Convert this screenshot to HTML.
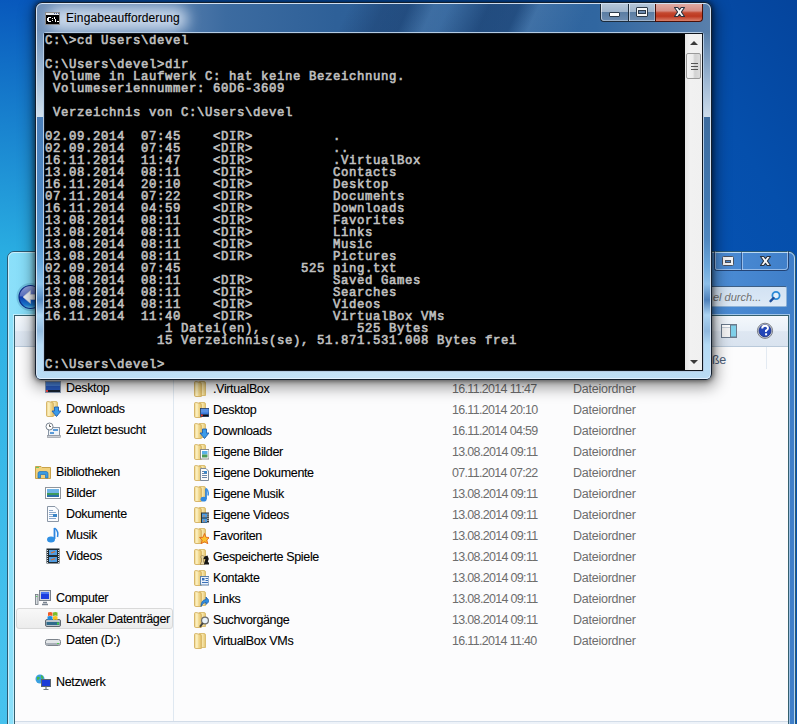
<!DOCTYPE html>
<html><head><meta charset="utf-8">
<style>
*{margin:0;padding:0;box-sizing:border-box}
html,body{width:797px;height:724px;overflow:hidden}
body{position:relative;font-family:"Liberation Sans",sans-serif;
background:radial-gradient(circle at -60px 700px,#46c2ee 60px,#2aaee2 450px,#0858bc 705px,#054fac 975px,#05449c 1110px);}
.abs{position:absolute}
svg{display:block}

/* ---------- explorer ---------- */
#exp{left:7px;top:251px;width:789px;height:490px;border-radius:7px 7px 0 0;
background:linear-gradient(90deg,#8ce0fa 0px,#84dcf8 28px,#6ab8ea 250px,#4c8dd6 704px,#3f7ec8 789px);
border:1px solid #2c5a72;}
#exp .ehl{left:0;top:0;right:0;bottom:0;border:1px solid rgba(225,245,255,.75);border-radius:6px 6px 0 0}
#client{left:6px;top:63px;width:775px;height:430px;background:#fcfcfd;border:1px solid #35606f;box-shadow:0 0 0 1px rgba(235,250,255,.55)}
#cmdbar{left:0;top:0;width:773px;height:31px;border-bottom:1px solid #b9c9da;
background:linear-gradient(#f4f8fc,#e9f0f8 48%,#dee7f2 52%,#d9e3ef)}
#navsep{left:158px;top:31px;width:1px;height:375px;background:#dfe8f1}
#colsep{left:751px;top:31px;width:1px;height:22px;background:#e3eaf2}
#details{left:0;top:405px;width:773px;height:30px;border-top:1px solid #d2dce8;background:linear-gradient(#eef3f9,#e3eaf3)}
#sel{left:16px;top:608px;width:157px;height:21px;border:1px solid #d9d9d9;border-radius:3px;background:linear-gradient(#f8f8f8,#ececec)}
.ic{position:absolute;width:16px;height:16px}
.t{position:absolute;font-size:11.7px;line-height:14px;white-space:nowrap}
.nv{font-size:12.5px;letter-spacing:-0.35px}
.nv{color:#000;-webkit-text-stroke:0.2px rgba(0,0,0,.6)}
.dt{color:#6d6d6d;font-size:12.5px;letter-spacing:-0.68px}
.ty{color:#6d6d6d;font-size:12.5px;letter-spacing:-0.25px}
#hdr{left:712px;top:353px;font-size:12.5px;letter-spacing:-0.35px;line-height:14px;color:#4c607a}
#back{left:14px;top:281px;width:26px;height:32px}
#search{left:711px;top:286px;width:76px;height:21px;border:1px solid #8fb3d8;border-top-color:#3d5f86;border-left:none;border-radius:0 2px 2px 0;
background:linear-gradient(#d2e2f3,#dde9f6)}
#search .st{position:absolute;left:2px;top:3px;font-style:italic;font-size:11px;line-height:14px;color:#707070;white-space:nowrap}
#ebtns{left:711px;top:251px;width:80px;height:21px}
#cmdicons{left:711px;top:316px;width:76px;height:30px}

/* ---------- console ---------- */
#con{left:35px;top:2px;width:677px;height:378px;border-radius:7px 7px 6px 6px;
border:1px solid #14202e;overflow:hidden;
background:linear-gradient(90deg,#6f8fb7 0px,#5c82b0 120px,#3c6ba0 190px,#2e6098 300px,#3066a0 560px,#5a80ac 677px);
box-shadow:0 0 5px 1px rgba(0,0,0,.5),1px 4px 15px 3px rgba(0,0,0,.42)}
#con .hl{left:0;top:0;right:0;bottom:0;border:1px solid rgba(235,245,255,.85);border-radius:6px 6px 5px 5px}
#con .sideL{left:1px;top:28px;width:7px;height:86px;background:linear-gradient(#6f91b9,#a9c2da 60%,#d2e1ee)}
#con .sideR{left:666px;top:28px;width:8px;height:86px;background:linear-gradient(#587ea8,#a0b9d4 60%,#cddcea)}
#con .lowL{left:1px;top:114px;width:7px;height:262px;background:linear-gradient(#4a7eb8 0.0%,#4c86c2 31.7%,#5694ce 46.9%,#6aaade 56.5%,#8cc2ea 63.7%,#5488c0 69.8%,#b0d8f4 75.6%,#94bce0 81.7%,#b8dcf6 87.0%,#c2e2f8 100.0%)}
#con .lowR{left:666px;top:114px;width:8px;height:262px;background:linear-gradient(#3d6c9e 0.0%,#4278b0 31.7%,#5088c0 46.9%,#6aa6da 56.5%,#8cbee8 63.7%,#4e80ba 69.8%,#acd4f2 75.6%,#90b8de 81.7%,#b4daf4 87.0%,#c0e0f8 100.0%)}
#con .bot{left:1px;top:367px;width:673px;height:9px;background:linear-gradient(90deg,#b9dcf5,#c6e3f7 50%,#b9dbf3)}
#con .glow{left:12px;top:4px;width:140px;height:24px;border-radius:12px;background:rgba(218,230,245,.85);filter:blur(7px)}
#con .icon{left:9px;top:9px;width:15px;height:13px}
#con .title{left:30px;top:8px;font-size:12px;letter-spacing:0.1px;color:#000;white-space:nowrap;-webkit-text-stroke:0.2px rgba(0,0,0,.5)}
#sbox{left:7px;top:29px;width:661px;height:340px;border:1px solid #b4cbe3;border-radius:3px 3px 0 0}
#screen{left:8px;top:30px;width:659px;height:338px;background:#000;border:1px solid #10161e}
#screen pre{position:absolute;left:0px;top:1px;font-family:"Liberation Mono",monospace;font-weight:normal;
font-size:12.3px;letter-spacing:0.62px;line-height:12px;color:#c0c0c0;-webkit-text-stroke:0.6px #c0c0c0}
#sb{left:640px;top:0px;width:17px;height:336px;background:linear-gradient(90deg,#e6e6e6,#f1f1f1 30%,#f0f0f0)}
#sb .up{left:5px;top:7px;width:0;height:0;border-left:4px solid transparent;border-right:4px solid transparent;border-bottom:4px solid #3a3a3a}
#sb .dn{left:5px;top:326px;width:0;height:0;border-left:4px solid transparent;border-right:4px solid transparent;border-top:4px solid #3a3a3a}
#sb .th{left:1px;top:19px;width:15px;height:26px;border:1px solid #9a9a9a;border-radius:2px;
background:linear-gradient(90deg,#f2f2f2,#ececec 45%,#d2d2d2 60%,#dcdcdc)}
#sb .th i{position:absolute;left:4px;width:7px;height:1px;background:#555}
.btns{left:563px;top:0px;width:104px;height:20px}
.bmin{left:1px;top:1px;width:28px;height:18px;border:1px solid #1d2c3c;border-top:none;border-right:none;border-radius:0 0 0 4px;
background:linear-gradient(#b4c5d8,#9fb4cb 45%,#5b7da3 50%,#6d8cb0);box-shadow:inset 1px 0 0 rgba(255,255,255,.55),inset 0 -1px 0 rgba(255,255,255,.35)}
.bmax{left:29px;top:1px;width:27px;height:18px;border-bottom:1px solid #1d2c3c;border-left:1px solid #1d2c3c;
background:linear-gradient(#b4c5d8,#9fb4cb 45%,#5b7da3 50%,#6d8cb0);box-shadow:inset 1px 0 0 rgba(255,255,255,.55),inset -1px 0 0 rgba(255,255,255,.3),inset 0 -1px 0 rgba(255,255,255,.35)}
.bcls{left:56px;top:1px;width:48px;height:18px;border:1px solid #4a0f08;border-top:none;border-radius:0 0 4px 0;
background:linear-gradient(#e0aaa2,#d68e84 40%,#c4482f 52%,#bd3820 72%,#cf6650 90%,#d8806a)}
.bmin i{position:absolute;left:8px;top:8px;width:11px;height:5px;background:#fff;border:1px solid #2c3a4a;border-radius:1px}
.bmax i{position:absolute;left:7px;top:3px;width:12px;height:10px;background:#f6f6f6;border:1px solid #2c3a4a;border-radius:1px}
.bmax i b{position:absolute;left:1px;top:2px;width:8px;height:4px;background:#6a88ae;border:1px solid #2c3a4a}
#con .streak{left:0;top:0;width:677px;height:31px;transform:skewX(-25deg);transform-origin:0 31px;
background:linear-gradient(90deg,rgba(0,0,0,0) 300px,rgba(0,15,50,.22) 335px,rgba(0,15,50,.25) 360px,rgba(255,255,255,.07) 385px,rgba(255,255,255,.06) 400px,rgba(0,15,50,.28) 440px,rgba(0,15,50,.26) 470px,rgba(255,255,255,.08) 490px,rgba(0,0,0,0) 540px)}

</style></head><body>
<svg width="0" height="0" style="position:absolute"><defs>
<linearGradient id="fgF" x1="0" y1="0" x2="1" y2="0"><stop offset="0" stop-color="#ecd184"/><stop offset="0.35" stop-color="#fdf3c8"/><stop offset="0.6" stop-color="#f2da92"/><stop offset="1" stop-color="#e4c36c"/></linearGradient>
<linearGradient id="fgB" x1="0" y1="0" x2="1" y2="0"><stop offset="0" stop-color="#e9cd7e"/><stop offset="0.5" stop-color="#f6e4a8"/><stop offset="1" stop-color="#e3c470"/></linearGradient>
</defs></svg>
<div id="exp" class="abs"><div class="ehl abs"></div>
  <div id="client" class="abs">
    <div id="cmdbar" class="abs"></div>
    <div id="navsep" class="abs"></div>
    <div id="colsep" class="abs"></div>
    <div id="details" class="abs"></div>
  </div>
</div>
<div id="sel" class="abs"></div>
<div id="back" class="abs"><svg width="26" height="32" viewBox="0 0 26 32">
<defs><linearGradient id="bg1" x1="0" y1="0" x2="0" y2="1"><stop offset="0" stop-color="#9aa8dc"/><stop offset="0.45" stop-color="#5a70c4"/><stop offset="0.5" stop-color="#0b3ab0"/><stop offset="0.85" stop-color="#1d7ed6"/><stop offset="1" stop-color="#6fd0f0"/></linearGradient></defs>
<circle cx="16.5" cy="16" r="13" fill="none" stroke="rgba(40,110,150,.25)" stroke-width="2"/>
<circle cx="16.5" cy="16" r="11.5" fill="url(#bg1)" stroke="#0a2a88" stroke-width="1.2"/>
<path d="M9 16 L16.5 9.5 L16.5 13.5 L26 13.5 L26 18.5 L16.5 18.5 L16.5 22.5 Z" fill="#eceff4" stroke="#c8ccd6" stroke-width="0.6" stroke-linejoin="round"/>
</svg></div>
<div id="search" class="abs"><div class="st">el durch...</div>
<svg width="20" height="19" style="position:absolute;left:55px;top:0"><circle cx="10" cy="8.5" r="3.6" fill="#e4f0fa" stroke="#2b8ad6" stroke-width="1.8"/><path d="M7.6 11 L4.5 14.2" stroke="#1d4f9c" stroke-width="2.4" stroke-linecap="round"/></svg></div>
<div id="ebtns" class="abs"><svg width="80" height="21" viewBox="0 0 80 21">
<path d="M3.5 0.5 V17.5 Q3.5 19.5 5.5 19.5 H74.5 Q77.5 19.5 77.5 16.5 V0.5" fill="none" stroke="rgba(20,40,80,.7)"/>
<path d="M4.5 0.5 V17 Q4.5 18.5 6 18.5 H74 Q76.5 18.5 76.5 16 V0.5 M31.5 1 V18.5" fill="none" stroke="rgba(220,235,255,.55)"/>
<path d="M30.5 1 V19" stroke="rgba(20,40,80,.5)"/>
<rect x="11.5" y="5.5" width="11" height="9" rx="1" fill="#f4f4f4" stroke="#4a5260"/><rect x="14.5" y="9.5" width="5" height="2" fill="#4d86c8" stroke="#4a5260" stroke-width="1"/>
<path d="M49.5 5.5 L52.8 5.5 L54.5 7.7 L56.2 5.5 L59.5 5.5 L56.4 10 L59.5 14.5 L56.2 14.5 L54.5 12.3 L52.8 14.5 L49.5 14.5 L52.6 10 Z" fill="#f8f8f8" stroke="#2a3340" stroke-width="1.1" stroke-linejoin="round"/>
</svg></div>
<div id="cmdicons" class="abs"><svg width="76" height="30" viewBox="0 0 76 30">
<rect x="10.5" y="8.5" width="15" height="13" fill="#f4f4f4" stroke="#6b7a8c"/><rect x="11" y="9" width="8" height="2" fill="#fff"/><path d="M11 11.5 H19" stroke="#c4ccd6"/><rect x="19.5" y="9" width="6" height="12" fill="#7fd0ea" stroke="#6b7a8c"/>
<circle cx="54" cy="14.8" r="7.6" fill="#c9ced6" stroke="#7c8088" stroke-width="1"/><circle cx="54" cy="14.8" r="6" fill="#2346b8" stroke="#1b2f80" stroke-width="0.8"/>
<path d="M51.2 12.6 Q51.2 9.7 54.1 9.7 Q57 9.7 57 12.3 Q57 13.8 55 14.6 V16" fill="none" stroke="#fff" stroke-width="1.9"/><rect x="54.1" y="17.3" width="2" height="2" fill="#fff"/>
</svg></div>
<div id="hdr" class="abs">ße</div>
<div class="ic" style="left:45px;top:380px"><svg width="16" height="16" viewBox="0 0 16 16" style="position:absolute;left:0;top:0"><rect x="0.5" y="1.5" width="15" height="11" fill="#2e62c4" stroke="#8a9bb3"/><rect x="1" y="2" width="14" height="8" fill="#4a82d8"/><rect x="1" y="6" width="14" height="4" fill="#2a5cc0"/><rect x="1" y="10" width="14" height="2" fill="#15202e"/><rect x="1" y="10" width="2" height="2" fill="#e44"/></svg></div>
<div class="t nv" style="left:66px;top:381px">Desktop</div>
<div class="ic" style="left:45px;top:401px"><svg width="16" height="16" viewBox="0 0 16 16" style="position:absolute;left:0;top:0"><path d="M6.5 0.5 H11 Q12.5 0.5 12.5 2 V14.5 H6.5 Z" fill="url(#fgB)" stroke="#d8ba6a" stroke-width="0.9"/>
<path d="M1.5 1.5 Q1.5 0.5 2.7 0.5 L7 1.3 Q8.3 1.7 8.3 3 V15.5 H2.7 Q1.5 15.5 1.5 14.3 Z" fill="url(#fgF)" stroke="#d4b060" stroke-width="0.9"/><path d="M9.5 6 H13.5 V10 H16 L11.5 15.5 L7 10 H9.5 Z" fill="#3b9ae8" stroke="#1d5fb0" stroke-width="0.9" stroke-linejoin="round"/></svg></div>
<div class="t nv" style="left:66px;top:402px">Downloads</div>
<div class="ic" style="left:45px;top:422px"><svg width="16" height="16" viewBox="0 0 16 16" style="position:absolute;left:0;top:0"><rect x="3.5" y="5.5" width="11" height="8" fill="#eef3f8" stroke="#8895a5"/><rect x="8" y="7" width="5" height="2" fill="#5a9ad8"/><rect x="5" y="10" width="4" height="2" fill="#5a9ad8"/><rect x="2.5" y="13.5" width="13" height="2" fill="#c8ccd2" stroke="#8a9099" stroke-width="0.6"/><circle cx="4.5" cy="4.5" r="3.5" fill="#fff" stroke="#7a8490"/><path d="M4.5 2.5 V4.5 H6" stroke="#333" stroke-width="0.8" fill="none"/></svg></div>
<div class="t nv" style="left:66px;top:423px">Zuletzt besucht</div>
<div class="ic" style="left:35px;top:464px"><svg width="16" height="16" viewBox="0 0 16 16" style="position:absolute;left:0;top:0"><path d="M0.5 2.5 H6 L7 3.5 H15.5 V14.5 H0.5 Z" fill="#f1d17c" stroke="#c9a24a"/><path d="M3 14 V9.5 Q3 7.5 5 7.5 H11 Q13 7.5 13 9.5 V14 H10.5 V10.5 H5.5 V14 Z" fill="#3a9ae0" stroke="#2270b8" stroke-width="0.7"/><rect x="1" y="3" width="3" height="1" fill="#6c6"/></svg></div>
<div class="t nv" style="left:56px;top:465px">Bibliotheken</div>
<div class="ic" style="left:45px;top:485px"><svg width="16" height="16" viewBox="0 0 16 16" style="position:absolute;left:0;top:0"><rect x="0.5" y="2.5" width="15" height="11" fill="#fff" stroke="#8f959c"/><rect x="2" y="4" width="12" height="4" fill="#6fb4e6"/><rect x="2" y="8" width="12" height="2" fill="#3d9a5c"/><rect x="2" y="10" width="12" height="2" fill="#2c6fa8"/></svg></div>
<div class="t nv" style="left:66px;top:486px">Bilder</div>
<div class="ic" style="left:45px;top:506px"><svg width="16" height="16" viewBox="0 0 16 16" style="position:absolute;left:0;top:0"><path d="M2.5 0.5 H10 L13.5 4 V15.5 H2.5 Z" fill="#fafcff" stroke="#8a96a6"/><path d="M4 4.5 H8 M4 6.5 H11 M4 8.5 H8 M4 10.5 H11 M4 12.5 H11" stroke="#8aa8cc"/><rect x="8" y="8" width="4" height="3" fill="#3a86c8"/></svg></div>
<div class="t nv" style="left:66px;top:507px">Dokumente</div>
<div class="ic" style="left:45px;top:527px"><svg width="16" height="16" viewBox="0 0 16 16" style="position:absolute;left:0;top:0"><path d="M9.5 1 V12" stroke="#2d86e0" stroke-width="1.8"/><ellipse cx="6" cy="12.5" rx="4" ry="3" fill="#2f8fe3"/><path d="M9.5 1 Q14 4 12.5 10" stroke="#2d86e0" stroke-width="1.5" fill="none"/></svg></div>
<div class="t nv" style="left:66px;top:528px">Musik</div>
<div class="ic" style="left:45px;top:548px"><svg width="16" height="16" viewBox="0 0 16 16" style="position:absolute;left:0;top:0"><rect x="1.5" y="0.5" width="13" height="15" fill="#1d2a33"/><path d="M2.5 2 V15 M13.5 2 V15" stroke="#ddd" stroke-width="1" stroke-dasharray="1 1"/><rect x="4" y="2" width="8" height="5" fill="#4f9be0"/><rect x="4" y="9" width="8" height="5" fill="#4f9be0"/><path d="M6 5 L10 3.5 M6 12 L10 10.5" stroke="#d86a2a" stroke-width="1.2"/></svg></div>
<div class="t nv" style="left:66px;top:549px">Videos</div>
<div class="ic" style="left:35px;top:590px"><svg width="16" height="16" viewBox="0 0 16 16" style="position:absolute;left:0;top:0"><rect x="4.5" y="0.5" width="11" height="10" fill="#d4d8dd" stroke="#7a828c"/><rect x="6" y="2" width="8" height="7" fill="#1c3fe0"/><rect x="6" y="2" width="8" height="2" fill="#4a78f0"/><path d="M8 12.5 H12 M7 14.5 H13" stroke="#7a8491" stroke-width="1.4"/><rect x="0.5" y="4.5" width="2.5" height="10" fill="#d8dde2" stroke="#70787f" stroke-width="0.8"/><rect x="1.3" y="6" width="1" height="1" fill="#3c3"/></svg></div>
<div class="t nv" style="left:56px;top:591px">Computer</div>
<div class="ic" style="left:45px;top:611px"><svg width="16" height="16" viewBox="0 0 16 16" style="position:absolute;left:0;top:0"><rect x="0.5" y="8.5" width="15" height="7" rx="1.5" fill="#bcc4cc" stroke="#5f6870"/><rect x="1.5" y="11" width="13" height="3" fill="#2f6a8a"/><rect x="12" y="11.5" width="2" height="2" fill="#4c4"/><path d="M3 1.5 Q5 0.5 7.5 1.5 V5 Q5 4 3 5 Z" fill="#f05a24"/><path d="M8 1.5 Q10.5 0.5 12.5 1.5 V5 Q10.5 4 8 5 Z" fill="#7cbb2a"/><path d="M2.5 5.5 Q5 4.5 7.5 5.5 V9 Q5 8 2.5 9 Z" fill="#1e8de0"/><path d="M8 5.5 Q10.5 4.5 12.5 5.5 V9 Q10.5 8 8 9 Z" fill="#fcc21c"/></svg></div>
<div class="t nv" style="left:66px;top:612px">Lokaler Datenträger</div>
<div class="ic" style="left:45px;top:632px"><svg width="16" height="16" viewBox="0 0 16 16" style="position:absolute;left:0;top:0"><rect x="0.5" y="7.5" width="15" height="6" rx="2" fill="#e3e6e9" stroke="#7c838b"/><rect x="1" y="11" width="14" height="2" fill="#a9b0b8"/><rect x="12" y="11" width="2" height="1" fill="#5c5"/></svg></div>
<div class="t nv" style="left:66px;top:633px">Daten (D:)</div>
<div class="ic" style="left:35px;top:674px"><svg width="16" height="16" viewBox="0 0 16 16" style="position:absolute;left:0;top:0"><circle cx="5" cy="5" r="4.5" fill="#3aa0e0"/><path d="M2 3 Q4 2 5 4 Q4 6 2 6 Z M6 1 Q9 2 8 5 Q6 5 6 3 Z" fill="#48b848"/><rect x="6.5" y="5.5" width="9" height="7" fill="#1b3bd8" stroke="#5a6570"/><path d="M11 12.5 V15 M8.5 15.5 H13.5" stroke="#6d7580" stroke-width="1.2"/></svg></div>
<div class="t nv" style="left:56px;top:675px">Netzwerk</div>
<div class="ic" style="left:193px;top:381px"><svg width="16" height="16" viewBox="0 0 16 16" style="position:absolute;left:0;top:0"><path d="M6.5 0.5 H11 Q12.5 0.5 12.5 2 V14.5 H6.5 Z" fill="url(#fgB)" stroke="#d8ba6a" stroke-width="0.9"/>
<path d="M1.5 1.5 Q1.5 0.5 2.7 0.5 L7 1.3 Q8.3 1.7 8.3 3 V15.5 H2.7 Q1.5 15.5 1.5 14.3 Z" fill="url(#fgF)" stroke="#d4b060" stroke-width="0.9"/></svg></div>
<div class="t nv" style="left:213px;top:382px">.VirtualBox</div>
<div class="t dt" style="left:452px;top:382px">16.11.2014 11:47</div>
<div class="t ty" style="left:573px;top:382px">Dateiordner</div>
<div class="ic" style="left:193px;top:402px"><svg width="16" height="16" viewBox="0 0 16 16" style="position:absolute;left:0;top:0"><path d="M6.5 0.5 H11 Q12.5 0.5 12.5 2 V14.5 H6.5 Z" fill="url(#fgB)" stroke="#d8ba6a" stroke-width="0.9"/>
<path d="M1.5 1.5 Q1.5 0.5 2.7 0.5 L7 1.3 Q8.3 1.7 8.3 3 V15.5 H2.7 Q1.5 15.5 1.5 14.3 Z" fill="url(#fgF)" stroke="#d4b060" stroke-width="0.9"/><rect x="7.5" y="6.5" width="8.5" height="8" fill="#3a78d8" stroke="#223c6a" stroke-width="0.8"/><rect x="8" y="7" width="7.5" height="3.5" fill="#5a92e6"/><rect x="8" y="12.5" width="7.5" height="1.8" fill="#111"/><rect x="8" y="12.5" width="1.8" height="1.8" fill="#e33"/></svg></div>
<div class="t nv" style="left:213px;top:403px">Desktop</div>
<div class="t dt" style="left:452px;top:403px">16.11.2014 20:10</div>
<div class="t ty" style="left:573px;top:403px">Dateiordner</div>
<div class="ic" style="left:193px;top:423px"><svg width="16" height="16" viewBox="0 0 16 16" style="position:absolute;left:0;top:0"><path d="M6.5 0.5 H11 Q12.5 0.5 12.5 2 V14.5 H6.5 Z" fill="url(#fgB)" stroke="#d8ba6a" stroke-width="0.9"/>
<path d="M1.5 1.5 Q1.5 0.5 2.7 0.5 L7 1.3 Q8.3 1.7 8.3 3 V15.5 H2.7 Q1.5 15.5 1.5 14.3 Z" fill="url(#fgF)" stroke="#d4b060" stroke-width="0.9"/><path d="M9.5 6 H13.5 V10 H16 L11.5 15.5 L7 10 H9.5 Z" fill="#3b9ae8" stroke="#1d5fb0" stroke-width="0.9" stroke-linejoin="round"/></svg></div>
<div class="t nv" style="left:213px;top:424px">Downloads</div>
<div class="t dt" style="left:452px;top:424px">16.11.2014 04:59</div>
<div class="t ty" style="left:573px;top:424px">Dateiordner</div>
<div class="ic" style="left:193px;top:444px"><svg width="16" height="16" viewBox="0 0 16 16" style="position:absolute;left:0;top:0"><path d="M6.5 0.5 H11 Q12.5 0.5 12.5 2 V14.5 H6.5 Z" fill="url(#fgB)" stroke="#d8ba6a" stroke-width="0.9"/>
<path d="M1.5 1.5 Q1.5 0.5 2.7 0.5 L7 1.3 Q8.3 1.7 8.3 3 V15.5 H2.7 Q1.5 15.5 1.5 14.3 Z" fill="url(#fgF)" stroke="#d4b060" stroke-width="0.9"/><rect x="7.5" y="5.5" width="8.5" height="9.5" fill="#fff" stroke="#8a8a8a"/><rect x="9" y="7" width="5.5" height="3.5" fill="#5ab0e8"/><rect x="9" y="10.5" width="5.5" height="3" fill="#4c9a58"/></svg></div>
<div class="t nv" style="left:213px;top:445px">Eigene Bilder</div>
<div class="t dt" style="left:452px;top:445px">13.08.2014 09:11</div>
<div class="t ty" style="left:573px;top:445px">Dateiordner</div>
<div class="ic" style="left:193px;top:465px"><svg width="16" height="16" viewBox="0 0 16 16" style="position:absolute;left:0;top:0"><path d="M6.5 0.5 H11 Q12.5 0.5 12.5 2 V14.5 H6.5 Z" fill="url(#fgB)" stroke="#d8ba6a" stroke-width="0.9"/>
<path d="M1.5 1.5 Q1.5 0.5 2.7 0.5 L7 1.3 Q8.3 1.7 8.3 3 V15.5 H2.7 Q1.5 15.5 1.5 14.3 Z" fill="url(#fgF)" stroke="#d4b060" stroke-width="0.9"/><path d="M7.5 3.5 H13 L15.5 6 V15.5 H7.5 Z" fill="#fafafa" stroke="#7e8a99"/><path d="M9 6.5 H12 M9 8.5 H14 M9 10.5 H14 M9 12.5 H14" stroke="#6a84a8"/><rect x="11" y="6" width="3" height="2.5" fill="#3a86c8"/></svg></div>
<div class="t nv" style="left:213px;top:466px">Eigene Dokumente</div>
<div class="t dt" style="left:452px;top:466px">07.11.2014 07:22</div>
<div class="t ty" style="left:573px;top:466px">Dateiordner</div>
<div class="ic" style="left:193px;top:486px"><svg width="16" height="16" viewBox="0 0 16 16" style="position:absolute;left:0;top:0"><path d="M6.5 0.5 H11 Q12.5 0.5 12.5 2 V14.5 H6.5 Z" fill="url(#fgB)" stroke="#d8ba6a" stroke-width="0.9"/>
<path d="M1.5 1.5 Q1.5 0.5 2.7 0.5 L7 1.3 Q8.3 1.7 8.3 3 V15.5 H2.7 Q1.5 15.5 1.5 14.3 Z" fill="url(#fgF)" stroke="#d4b060" stroke-width="0.9"/><path d="M13 2.5 V13" stroke="#2a7fd8" stroke-width="1.7"/><ellipse cx="10.6" cy="13.2" rx="3" ry="2.4" fill="#2f88e0"/><path d="M13.2 2.5 Q16 5 15 9.5" stroke="#3a90e4" stroke-width="1.5" fill="none"/></svg></div>
<div class="t nv" style="left:213px;top:487px">Eigene Musik</div>
<div class="t dt" style="left:452px;top:487px">13.08.2014 09:11</div>
<div class="t ty" style="left:573px;top:487px">Dateiordner</div>
<div class="ic" style="left:193px;top:507px"><svg width="16" height="16" viewBox="0 0 16 16" style="position:absolute;left:0;top:0"><path d="M6.5 0.5 H11 Q12.5 0.5 12.5 2 V14.5 H6.5 Z" fill="url(#fgB)" stroke="#d8ba6a" stroke-width="0.9"/>
<path d="M1.5 1.5 Q1.5 0.5 2.7 0.5 L7 1.3 Q8.3 1.7 8.3 3 V15.5 H2.7 Q1.5 15.5 1.5 14.3 Z" fill="url(#fgF)" stroke="#d4b060" stroke-width="0.9"/><rect x="8" y="5.5" width="8" height="11" fill="#2b3338"/><path d="M15 6.5 V16" stroke="#e8e8e8" stroke-width="1.2" stroke-dasharray="1.2 0.9"/><rect x="9" y="6.5" width="5" height="4" fill="#4f9de0"/><rect x="9" y="11.5" width="5" height="4" fill="#4f9de0"/><rect x="10" y="8.5" width="2" height="1" fill="#e08040"/><rect x="10" y="13.5" width="2" height="1" fill="#e08040"/></svg></div>
<div class="t nv" style="left:213px;top:508px">Eigene Videos</div>
<div class="t dt" style="left:452px;top:508px">13.08.2014 09:11</div>
<div class="t ty" style="left:573px;top:508px">Dateiordner</div>
<div class="ic" style="left:193px;top:528px"><svg width="16" height="16" viewBox="0 0 16 16" style="position:absolute;left:0;top:0"><path d="M6.5 0.5 H11 Q12.5 0.5 12.5 2 V14.5 H6.5 Z" fill="url(#fgB)" stroke="#d8ba6a" stroke-width="0.9"/>
<path d="M1.5 1.5 Q1.5 0.5 2.7 0.5 L7 1.3 Q8.3 1.7 8.3 3 V15.5 H2.7 Q1.5 15.5 1.5 14.3 Z" fill="url(#fgF)" stroke="#d4b060" stroke-width="0.9"/><path d="M11.5 5.5 L13 9.3 L16.5 9.5 L13.8 12 L14.8 15.8 L11.5 13.7 L8.2 15.8 L9.2 12 L6.5 9.5 L10 9.3 Z" fill="#fbc22e" stroke="#e0641a" stroke-width="0.9" stroke-linejoin="round"/></svg></div>
<div class="t nv" style="left:213px;top:529px">Favoriten</div>
<div class="t dt" style="left:452px;top:529px">13.08.2014 09:11</div>
<div class="t ty" style="left:573px;top:529px">Dateiordner</div>
<div class="ic" style="left:193px;top:549px"><svg width="16" height="16" viewBox="0 0 16 16" style="position:absolute;left:0;top:0"><path d="M6.5 0.5 H11 Q12.5 0.5 12.5 2 V14.5 H6.5 Z" fill="url(#fgB)" stroke="#d8ba6a" stroke-width="0.9"/>
<path d="M1.5 1.5 Q1.5 0.5 2.7 0.5 L7 1.3 Q8.3 1.7 8.3 3 V15.5 H2.7 Q1.5 15.5 1.5 14.3 Z" fill="url(#fgF)" stroke="#d4b060" stroke-width="0.9"/><path d="M7.5 15.5 H11.5 V14 L10.5 13 V9 L11.5 8 L9.5 6 L7.5 8 L8.5 9 V13 L7.5 14 Z" fill="#e8d8a8" stroke="#8a7040" stroke-width="0.6"/><path d="M11 15.5 H16 V14 L14.8 12.5 L15.8 10 L14.5 6.5 L11.5 7.5 L10.5 10 L12.5 10.2 L11.5 13 Z" fill="#151515"/></svg></div>
<div class="t nv" style="left:213px;top:550px">Gespeicherte Spiele</div>
<div class="t dt" style="left:452px;top:550px">13.08.2014 09:11</div>
<div class="t ty" style="left:573px;top:550px">Dateiordner</div>
<div class="ic" style="left:193px;top:570px"><svg width="16" height="16" viewBox="0 0 16 16" style="position:absolute;left:0;top:0"><path d="M6.5 0.5 H11 Q12.5 0.5 12.5 2 V14.5 H6.5 Z" fill="url(#fgB)" stroke="#d8ba6a" stroke-width="0.9"/>
<path d="M1.5 1.5 Q1.5 0.5 2.7 0.5 L7 1.3 Q8.3 1.7 8.3 3 V15.5 H2.7 Q1.5 15.5 1.5 14.3 Z" fill="url(#fgF)" stroke="#d4b060" stroke-width="0.9"/><rect x="7.5" y="6.5" width="8.5" height="8.5" fill="#eaf2fb" stroke="#5a7fa8"/><rect x="9" y="8" width="2.5" height="2.5" fill="#3a70b8"/><path d="M12.5 8.5 H15 M12.5 10.5 H15 M9 12.5 H15" stroke="#3a70b8"/></svg></div>
<div class="t nv" style="left:213px;top:571px">Kontakte</div>
<div class="t dt" style="left:452px;top:571px">13.08.2014 09:11</div>
<div class="t ty" style="left:573px;top:571px">Dateiordner</div>
<div class="ic" style="left:193px;top:591px"><svg width="16" height="16" viewBox="0 0 16 16" style="position:absolute;left:0;top:0"><path d="M6.5 0.5 H11 Q12.5 0.5 12.5 2 V14.5 H6.5 Z" fill="url(#fgB)" stroke="#d8ba6a" stroke-width="0.9"/>
<path d="M1.5 1.5 Q1.5 0.5 2.7 0.5 L7 1.3 Q8.3 1.7 8.3 3 V15.5 H2.7 Q1.5 15.5 1.5 14.3 Z" fill="url(#fgF)" stroke="#d4b060" stroke-width="0.9"/><path d="M8 15.5 Q8 9 13 8.5 V6 L16.5 10 L13 13.5 V11.3 Q10 11.3 8 15.5 Z" fill="#2f8de0" stroke="#1b5fb0" stroke-width="0.8" stroke-linejoin="round"/></svg></div>
<div class="t nv" style="left:213px;top:592px">Links</div>
<div class="t dt" style="left:452px;top:592px">13.08.2014 09:11</div>
<div class="t ty" style="left:573px;top:592px">Dateiordner</div>
<div class="ic" style="left:193px;top:612px"><svg width="16" height="16" viewBox="0 0 16 16" style="position:absolute;left:0;top:0"><path d="M6.5 0.5 H11 Q12.5 0.5 12.5 2 V14.5 H6.5 Z" fill="url(#fgB)" stroke="#d8ba6a" stroke-width="0.9"/>
<path d="M1.5 1.5 Q1.5 0.5 2.7 0.5 L7 1.3 Q8.3 1.7 8.3 3 V15.5 H2.7 Q1.5 15.5 1.5 14.3 Z" fill="url(#fgF)" stroke="#d4b060" stroke-width="0.9"/><circle cx="12" cy="8.5" r="3.4" fill="#e8f2fa" stroke="#6a6a6a" stroke-width="1.2"/><path d="M9.8 11 L7 14.8" stroke="#444" stroke-width="2"/></svg></div>
<div class="t nv" style="left:213px;top:613px">Suchvorgänge</div>
<div class="t dt" style="left:452px;top:613px">13.08.2014 09:11</div>
<div class="t ty" style="left:573px;top:613px">Dateiordner</div>
<div class="ic" style="left:193px;top:633px"><svg width="16" height="16" viewBox="0 0 16 16" style="position:absolute;left:0;top:0"><path d="M6.5 0.5 H11 Q12.5 0.5 12.5 2 V14.5 H6.5 Z" fill="url(#fgB)" stroke="#d8ba6a" stroke-width="0.9"/>
<path d="M1.5 1.5 Q1.5 0.5 2.7 0.5 L7 1.3 Q8.3 1.7 8.3 3 V15.5 H2.7 Q1.5 15.5 1.5 14.3 Z" fill="url(#fgF)" stroke="#d4b060" stroke-width="0.9"/></svg></div>
<div class="t nv" style="left:213px;top:634px">VirtualBox VMs</div>
<div class="t dt" style="left:452px;top:634px">16.11.2014 11:40</div>
<div class="t ty" style="left:573px;top:634px">Dateiordner</div>
<!-- CONSOLE -->
<div id="con" class="abs">
  <div class="sideL abs"></div><div class="sideR abs"></div>
  <div class="lowL abs"></div><div class="lowR abs"></div>
  <div class="bot abs"></div>
  <div class="streak abs"></div>
  <div class="glow abs"></div>
  <div class="hl abs"></div>
  <div class="icon abs"><svg width="15" height="13" viewBox="0 0 15 13" shape-rendering="crispEdges">
<rect x="0" y="0" width="15" height="13" fill="#8c8c8c"/><rect x="1" y="1" width="13" height="2" fill="#dfe3e8"/><rect x="9" y="1" width="1" height="1" fill="#4a5d90"/><rect x="11" y="1" width="1" height="1" fill="#4a5d90"/><rect x="13" y="1" width="1" height="1" fill="#4a5d90"/>
<rect x="1" y="3" width="13" height="9" fill="#000"/>
<path fill="#fff" d="M3 5h3v1h-3z M2 6h2v3h-2z M3 9h3v1h-3z M7 6h1v1h-1z M7 8h1v1h-1z M9 5h1v2h-1z M10 7h1v3h-1z M12 9h2v1h-2z"/>
</svg></div>
  <div class="title abs">Eingabeaufforderung</div>
  <div class="btns abs">
    <div class="bmin abs"><i></i></div>
    <div class="bmax abs"><i><b></b></i></div>
    <div class="bcls abs"><svg width="48" height="18" style="position:absolute;left:0;top:0"><path d="M18.5 3.5 L21.8 3.5 L23.5 5.7 L25.2 3.5 L28.5 3.5 L25.4 8 L28.5 12.5 L25.2 12.5 L23.5 10.3 L21.8 12.5 L18.5 12.5 L21.6 8 Z" fill="#f8f8f8" stroke="#2a3340" stroke-width="1.1" stroke-linejoin="round"/></svg></div>
  </div>
  <div id="sbox" class="abs"></div>
  <div id="screen" class="abs"><pre>C:\>cd Users\devel

C:\Users\devel>dir
 Volume in Laufwerk C: hat keine Bezeichnung.
 Volumeseriennummer: 60D6-3609

 Verzeichnis von C:\Users\devel

02.09.2014  07:45    &lt;DIR&gt;          .
02.09.2014  07:45    &lt;DIR&gt;          ..
16.11.2014  11:47    &lt;DIR&gt;          .VirtualBox
13.08.2014  08:11    &lt;DIR&gt;          Contacts
16.11.2014  20:10    &lt;DIR&gt;          Desktop
07.11.2014  07:22    &lt;DIR&gt;          Documents
16.11.2014  04:59    &lt;DIR&gt;          Downloads
13.08.2014  08:11    &lt;DIR&gt;          Favorites
13.08.2014  08:11    &lt;DIR&gt;          Links
13.08.2014  08:11    &lt;DIR&gt;          Music
13.08.2014  08:11    &lt;DIR&gt;          Pictures
02.09.2014  07:45               525 ping.txt
13.08.2014  08:11    &lt;DIR&gt;          Saved Games
13.08.2014  08:11    &lt;DIR&gt;          Searches
13.08.2014  08:11    &lt;DIR&gt;          Videos
16.11.2014  11:40    &lt;DIR&gt;          VirtualBox VMs
               1 Datei(en),            525 Bytes
              15 Verzeichnis(se), 51.871.531.008 Bytes frei

C:\Users\devel&gt;</pre>
    <div id="sb" class="abs"><div class="up abs"></div><div class="th abs"><i style="top:9px"></i><i style="top:12px"></i><i style="top:15px"></i></div><div class="dn abs"></div></div>
  </div>
</div>


</body></html>
